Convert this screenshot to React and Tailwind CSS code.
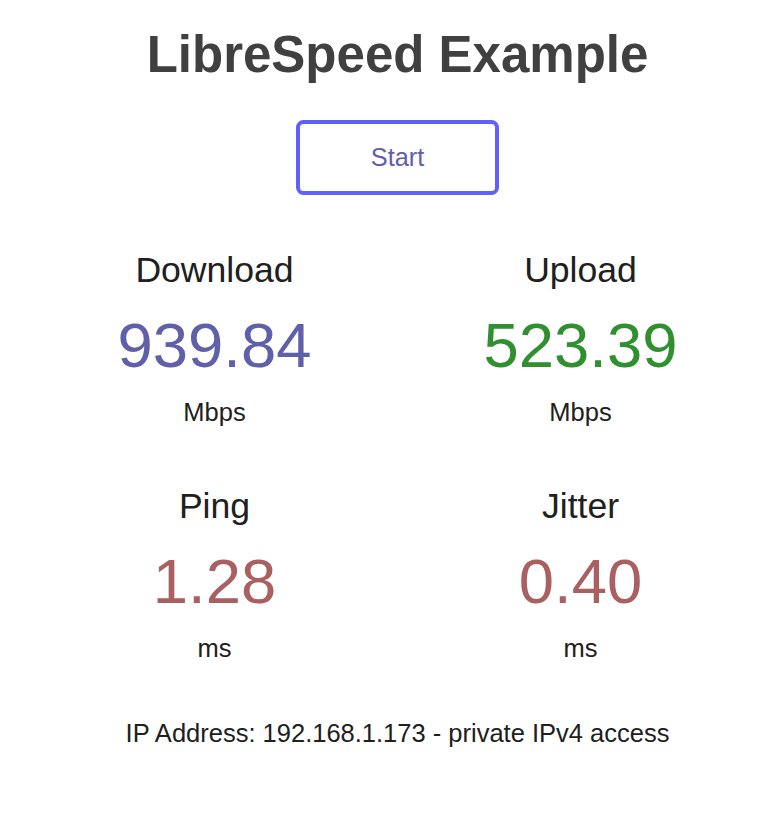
const tests = [
  { name: "Download", value: "939.84", unit: "Mbps", color: "text-[#6060AA]" },
  { name: "Upload", value: "523.39", unit: "Mbps", color: "text-[#309030]" },
  { name: "Ping", value: "1.28", unit: "ms", color: "text-[#AA6060]" },
  { name: "Jitter", value: "0.40", unit: "ms", color: "text-[#AA6060]" },
];

function TestArea({ test }) {
  return (
    <div className="flex flex-col items-center">
      <div className="h-[40px] text-[35.6px] leading-[40px] text-[#202020]">{test.name}</div>
      <div className={`mt-[20px] h-[70px] text-[63.4px] leading-[70px] ${test.color}`}>{test.value}</div>
      <div className="mt-[17px] h-[30px] text-[25.5px] leading-[30px] text-[#202020]">{test.unit}</div>
    </div>
  );
}

export default function App() {
  return (
    <div className="min-h-[813px] bg-white pl-[27px] pt-[25px] text-center font-['Liberation_Sans',Arial,sans-serif]">
      <h1 className="text-[51px] font-bold leading-[60px] text-[#404040]">LibreSpeed Example</h1>

      <div className="mt-[35px] flex justify-center">
        <div className="box-border h-[75px] w-[203px] cursor-pointer rounded-[7.5px] border-[4px] border-[#6060FF] text-[25.3px] leading-[67px] text-[#6060AA]">
          Start
        </div>
      </div>

      <div className="mt-[55px] grid grid-cols-[366px_366px] justify-center gap-y-[59px]">
        {tests.map((test) => (
          <TestArea key={test.name} test={test} />
        ))}
      </div>

      <div className="mt-[55px] h-[30px] text-[25.5px] leading-[30px] text-[#202020]">
        IP Address: 192.168.1.173 - private IPv4 access
      </div>
    </div>
  );
}
